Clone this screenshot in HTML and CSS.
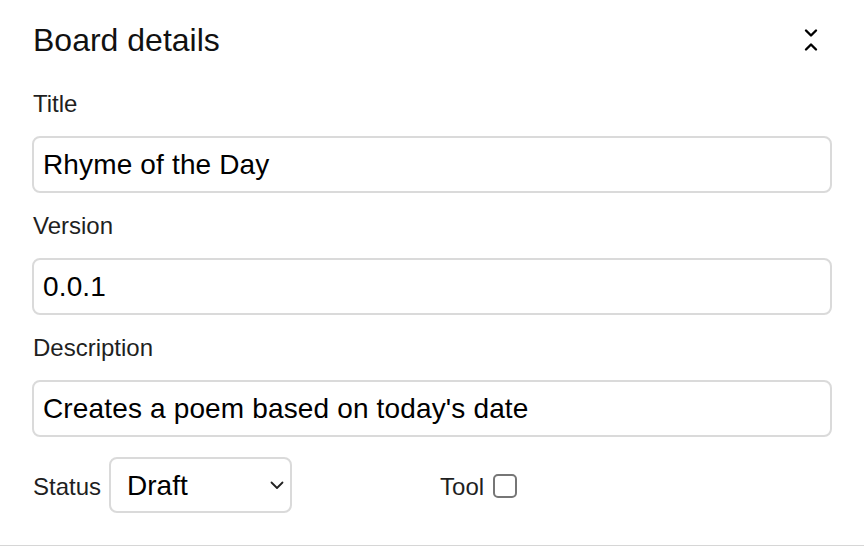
FILE: index.html
```html
<!DOCTYPE html>
<html lang="en">
<head>
<meta charset="utf-8">
<title>Board details</title>
<link rel="stylesheet" href="styles.css">
</head>
<body>
<section class="panel">
  <header class="panel-header">
    <h2 class="panel-title">Board details</h2>
    <button class="collapse" type="button" aria-label="Collapse">
      <svg width="14" height="24" viewBox="0 0 14 24" fill="none" stroke="#000" stroke-width="2.4" stroke-linecap="round" stroke-linejoin="round">
        <path d="M2 2.5 L7 7.5 L12 2.5"/>
        <path d="M2 21.5 L7 16.5 L12 21.5"/>
      </svg>
    </button>
  </header>

  <div class="field">
    <label class="field-label" for="title">Title</label>
    <input class="text-input" id="title" type="text" value="Rhyme of the Day">
  </div>

  <div class="field">
    <label class="field-label" for="version">Version</label>
    <input class="text-input" id="version" type="text" value="0.0.1">
  </div>

  <div class="field">
    <label class="field-label" for="desc">Description</label>
    <input class="text-input" id="desc" type="text" value="Creates a poem based on today's date">
  </div>

  <div class="status-row">
    <label class="inline-label" for="status">Status</label>
    <span class="select-wrap">
      <select class="select" id="status">
        <option>Draft</option>
        <option>Published</option>
      </select>
      <svg class="select-arrow" width="14" height="9" viewBox="0 0 14 9" fill="none" stroke="#222" stroke-width="1.8" stroke-linecap="round" stroke-linejoin="round">
        <path d="M1.5 1.5 L7 7 L12.5 1.5"/>
      </svg>
    </span>
    <label class="inline-label tool-label" for="tool">Tool</label>
    <input class="checkbox" id="tool" type="checkbox">
  </div>
</section>
</body>
</html>
```

FILE: styles.css
```css
html, body {
  margin: 0;
  padding: 0;
  background: #fff;
}

body {
  font-family: "Liberation Sans", Arial, Helvetica, sans-serif;
  color: #1b1b1b;
}

.panel {
  box-sizing: border-box;
  height: 546px;
  padding: 20px 32px 0 32px;
  border-bottom: 1px solid #d6d6d6;
}

.panel-header {
  display: flex;
  align-items: center;
  justify-content: space-between;
  height: 40px;
}

.panel-title {
  margin: 0 0 0 1px;
  font-size: 32px;
  line-height: 40px;
  font-weight: 400;
  color: #111;
}

.collapse {
  display: flex;
  align-items: center;
  justify-content: center;
  padding: 0;
  margin: 0 14px 0 0;
  border: 0;
  background: transparent;
}

.field {
  display: flex;
  flex-direction: column;
}

.field:first-of-type {
  margin-top: 30px;
}

.field + .field {
  margin-top: 19px;
}

.field-label {
  font-size: 24px;
  line-height: 28px;
  margin: 0 0 18px 1px;
  color: #1f1f1f;
}

.text-input {
  box-sizing: border-box;
  width: 800px;
  height: 57px;
  margin: 0;
  padding: 0 9px;
  border: 2px solid #dadada;
  border-radius: 8px;
  font-family: "Liberation Sans", Arial, Helvetica, sans-serif;
  font-size: 28px;
  letter-spacing: 0.15px;
  color: #000;
  background: #fff;
  outline: none;
}

.status-row {
  display: flex;
  align-items: center;
  margin-top: 20px;
  height: 56px;
}

.inline-label {
  font-size: 24px;
  line-height: 28px;
  margin-left: 1px;
  padding-top: 3px;
  color: #1f1f1f;
}

.select-wrap {
  position: relative;
  display: inline-flex;
  margin-left: 8px;
}

.select {
  box-sizing: border-box;
  width: 183px;
  height: 56px;
  margin: 0;
  padding: 0 0 0 16px;
  border: 2px solid #dadada;
  border-radius: 8px;
  background: #fff;
  font-family: "Liberation Sans", Arial, Helvetica, sans-serif;
  font-size: 28px;
  color: #000;
  appearance: none;
  -webkit-appearance: none;
  outline: none;
}

.select-arrow {
  position: absolute;
  right: 8px;
  top: 24px;
  pointer-events: none;
}

.tool-label {
  margin-left: 148px;
}

.checkbox {
  box-sizing: border-box;
  width: 24px;
  height: 24px;
  margin: 2px 0 0 9px;
  border: 2px solid #767676;
  border-radius: 5px;
  background: #fff;
  appearance: none;
  -webkit-appearance: none;
}
```
